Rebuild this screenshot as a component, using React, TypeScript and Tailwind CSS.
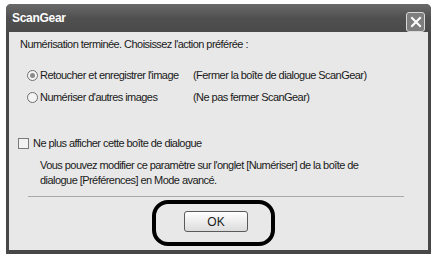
import React from 'react';

const font = { fontFamily: '"Liberation Sans", Arial, sans-serif' };

const Radio: React.FC<{ checked?: boolean }> = ({ checked }) => (
  <span className="w-[11px] h-[11px] rounded-full border border-[#6f6f6f] bg-[#f4f4f4] flex items-center justify-center shrink-0">
    {checked && <span className="w-[5px] h-[5px] rounded-full bg-[#8a8a8a]" />}
  </span>
);

export default function App() {
  return (
    <div className="w-[434px] h-[256px] bg-white pt-[4px] pl-[6px] text-[11px] tracking-[-0.55px] text-[#1a1a1a]" style={font}>
      <div className="relative w-[425px] h-[250px] flex flex-col bg-[#474747] rounded-t-[5px]">
        <div className="h-[28px] flex items-center justify-between pl-[6px] pr-[6px] bg-gradient-to-b from-[#6a6a6a] via-[#505050] to-[#4a4a4a] rounded-t-[5px]">
          <span className="text-white font-bold text-[12px] tracking-[-0.3px]">ScanGear</span>
          <span className="w-[19px] h-[20px] mt-[8px] rounded-[3px] border border-[#d8d8d8] bg-[#7e7e7e] flex items-center justify-center">
            <svg width="12" height="12" viewBox="0 0 12 12">
              <path d="M2 2 L10 10 M10 2 L2 10" stroke="white" strokeWidth="2" strokeLinecap="square" />
            </svg>
          </span>
        </div>
        <div className="flex-1 ml-[3px] mr-[3px] mb-[4px] bg-[#e8e8e8] flex flex-col pt-[5px]">
          <div className="pl-[11px] leading-[14px]">Numérisation terminée. Choisissez l'action préférée :</div>
          <div className="mt-[17px] flex flex-col gap-[8px] pl-[18px]">
            <div className="flex items-center h-[14px]">
              <Radio checked />
              <span className="ml-[2px] w-[153px] whitespace-nowrap">Retoucher et enregistrer l'image</span>
              <span className="whitespace-nowrap">(Fermer la boîte de dialogue ScanGear)</span>
            </div>
            <div className="flex items-center h-[14px]">
              <Radio />
              <span className="ml-[2px] w-[153px] whitespace-nowrap">Numériser d'autres images</span>
              <span className="whitespace-nowrap">(Ne pas fermer ScanGear)</span>
            </div>
          </div>
          <div className="mt-[32px] pl-[9px] flex items-center h-[14px]">
            <span className="w-[11px] h-[11px] border border-[#7a7a7a] bg-[#f2f2f2] shrink-0" />
            <span className="ml-[4px]">Ne plus afficher cette boîte de dialogue</span>
          </div>
          <div className="mt-[8px] pl-[31px] leading-[15px] whitespace-nowrap">
            Vous pouvez modifier ce paramètre sur l'onglet [Numériser] de la boîte de<br />
            dialogue [Préférences] en Mode avancé.
          </div>
          <div className="mt-[8px] ml-[19px] mr-[24px] h-[2px] border-t border-[#a8a8a8] border-b-white" />
          <div className="mt-[13px] flex justify-center pr-[5px]">
            <span className="w-[64px] h-[21px] rounded-[3px] border border-[#5a5a5a] bg-gradient-to-b from-white to-[#dcdcdc] flex items-center justify-center text-[12px] tracking-normal">OK</span>
          </div>
        </div>
        <div className="absolute left-[146px] top-[196px] w-[123px] h-[46px] rounded-[16px] border-[4px] border-black" />
      </div>
    </div>
  );
}
